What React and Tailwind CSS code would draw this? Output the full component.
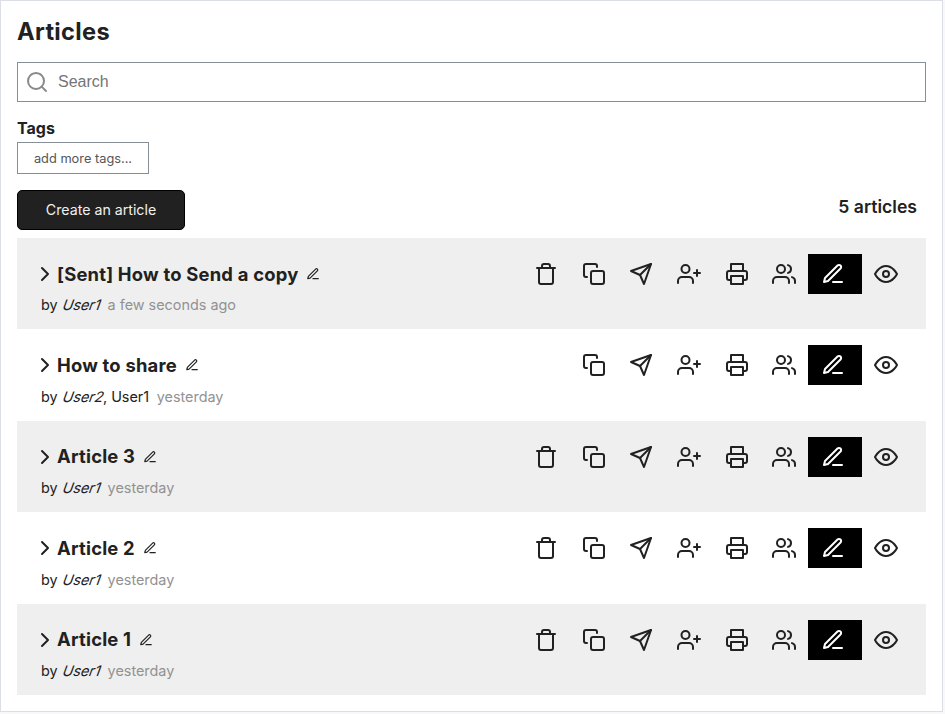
import React from "react";

const PATHS = {
  trash: (
    <>
      <path d="M3 6h18" />
      <path d="M19 6v14a2 2 0 0 1-2 2H7a2 2 0 0 1-2-2V6m3 0V4a2 2 0 0 1 2-2h4a2 2 0 0 1 2 2v2" />
    </>
  ),
  copy: (
    <>
      <rect x="9" y="9" width="13" height="13" rx="2" />
      <path d="M5 15H4a2 2 0 0 1-2-2V4a2 2 0 0 1 2-2h9a2 2 0 0 1 2 2v1" />
    </>
  ),
  send: (
    <>
      <path d="M22 2L11 13" />
      <path d="M22 2l-7 20-4-9-9-4 20-7z" />
    </>
  ),
  userPlus: (
    <>
      <path d="M16 21v-2a4 4 0 0 0-4-4H5a4 4 0 0 0-4 4v2" />
      <circle cx="8.5" cy="7" r="4" />
      <path d="M20 8v6M23 11h-6" />
    </>
  ),
  printer: (
    <>
      <path d="M6 9V2h12v7" />
      <path d="M6 18H4a2 2 0 0 1-2-2v-5a2 2 0 0 1 2-2h16a2 2 0 0 1 2 2v5a2 2 0 0 1-2 2h-2" />
      <path d="M6 14h12v8H6z" />
    </>
  ),
  users: (
    <>
      <path d="M17 21v-2a4 4 0 0 0-4-4H5a4 4 0 0 0-4 4v2" />
      <circle cx="9" cy="7" r="4" />
      <path d="M23 21v-2a4 4 0 0 0-3-3.87M16 3.13a4 4 0 0 1 0 7.75" />
    </>
  ),
  edit: (
    <>
      <path d="M12 20h9" />
      <path d="M16.5 3.5a2.121 2.121 0 0 1 3 3L7 19l-4 1 1-4L16.5 3.5z" />
    </>
  ),
  eye: (
    <>
      <path d="M1 12s4-8 11-8 11 8 11 8-4 8-11 8-11-8-11-8z" />
      <circle cx="12" cy="12" r="3" />
    </>
  ),
  chevron: <path d="M9 18l6-6-6-6" />,
  search: (
    <>
      <circle cx="11" cy="11" r="8" />
      <path d="M21 21l-4.35-4.35" />
    </>
  ),
};

function Icon({ name, className = "size-6" }) {
  return (
    <svg
      viewBox="0 0 24 24"
      fill="none"
      stroke="currentColor"
      strokeWidth="2"
      strokeLinecap="round"
      strokeLinejoin="round"
      className={`shrink-0 ${className}`}
    >
      {PATHS[name]}
    </svg>
  );
}

const ARTICLES = [
  { title: "[Sent] How to Send a copy", owner: "User1", date: "a few seconds ago", canDelete: true },
  { title: "How to share", owner: "User2", others: ", User1", date: "yesterday", canDelete: false },
  { title: "Article 3", owner: "User1", date: "yesterday", canDelete: true },
  { title: "Article 2", owner: "User1", date: "yesterday", canDelete: true },
  { title: "Article 1", owner: "User1", date: "yesterday", canDelete: true },
];

const ACTIONS = ["copy", "send", "userPlus", "printer", "users"];

function IconButton({ name }) {
  return (
    <button className="flex h-10 w-[47.6px] items-center justify-center">
      <Icon name={name} />
    </button>
  );
}

function Article({ article }) {
  return (
    <article className="flex h-[91.4px] items-start justify-between pt-4 pr-4 pl-6 odd:bg-[#efefef]">
      <div>
        <h2 className="flex h-10 items-center text-[18.4px] leading-7 font-bold">
          <Icon name="chevron" className="-ml-2 size-6" />
          <span className="pb-px tracking-[0.21px] whitespace-nowrap">{article.title}</span>
          <Icon name="edit" className="ml-2 size-3.5" />
        </h2>
        <p className="pt-[0.4px] text-[14.4px] leading-[22px] whitespace-pre">
          by <em className="inline-block -skew-x-[20deg] pl-px not-italic">{article.owner}</em>
          <span className="-ml-[0.6px]">{article.others}</span>{" "}
          <span className="ml-[3.5px] text-[#929292]">{article.date}</span>
        </p>
      </div>
      <div className="flex">
        {article.canDelete && <IconButton name="trash" />}
        {ACTIONS.map((name) => (
          <IconButton key={name} name={name} />
        ))}
        <button className="flex h-10 w-[54px] items-center bg-black pl-[13px] text-white">
          <Icon name="edit" />
        </button>
        <button className="flex h-10 w-12 items-center justify-center">
          <Icon name="eye" />
        </button>
      </div>
    </article>
  );
}

export default function App() {
  return (
    <div className="h-[714px] w-[945px] overflow-hidden bg-[#f8f8fa] font-['Inter',sans-serif] text-[#212121]">
      <main className="h-[712px] w-[943px] border border-[#dcdee5] bg-white px-4 pt-3">
        <h1 className="pt-px text-[23.6px] leading-9 font-bold tracking-[0.35px]">Articles</h1>
        <div className="mt-3 flex h-10 items-center border border-[#868e96] pl-[7px] text-[#8a8a8a]">
          <Icon name="search" />
          <input
            placeholder="Search"
            className="ml-[9px] flex-1 bg-transparent font-['Liberation_Sans',sans-serif] text-base outline-none placeholder:text-[#757575]"
          />
        </div>
        <h2 className="mt-3.5 mb-0.5 text-base leading-6 font-bold">Tags</h2>
        <button className="flex h-8 w-[132px] items-center justify-center border border-[#868e96] pt-px text-[12.8px] text-[#555]">
          add more tags...
        </button>
        <div className="mt-4 flex h-12 items-start justify-between pr-[9px]">
          <button className="h-10 w-[168px] rounded-[5px] border border-black bg-[#212121] text-[14.2px] text-[#f0f0f0]">
            Create an article
          </button>
          <strong className="pt-1 text-[17.6px] leading-[26px] font-semibold">5 articles</strong>
        </div>
        <section className="w-[909px]">
          {ARTICLES.map((article) => (
            <Article key={article.title} article={article} />
          ))}
        </section>
      </main>
    </div>
  );
}
